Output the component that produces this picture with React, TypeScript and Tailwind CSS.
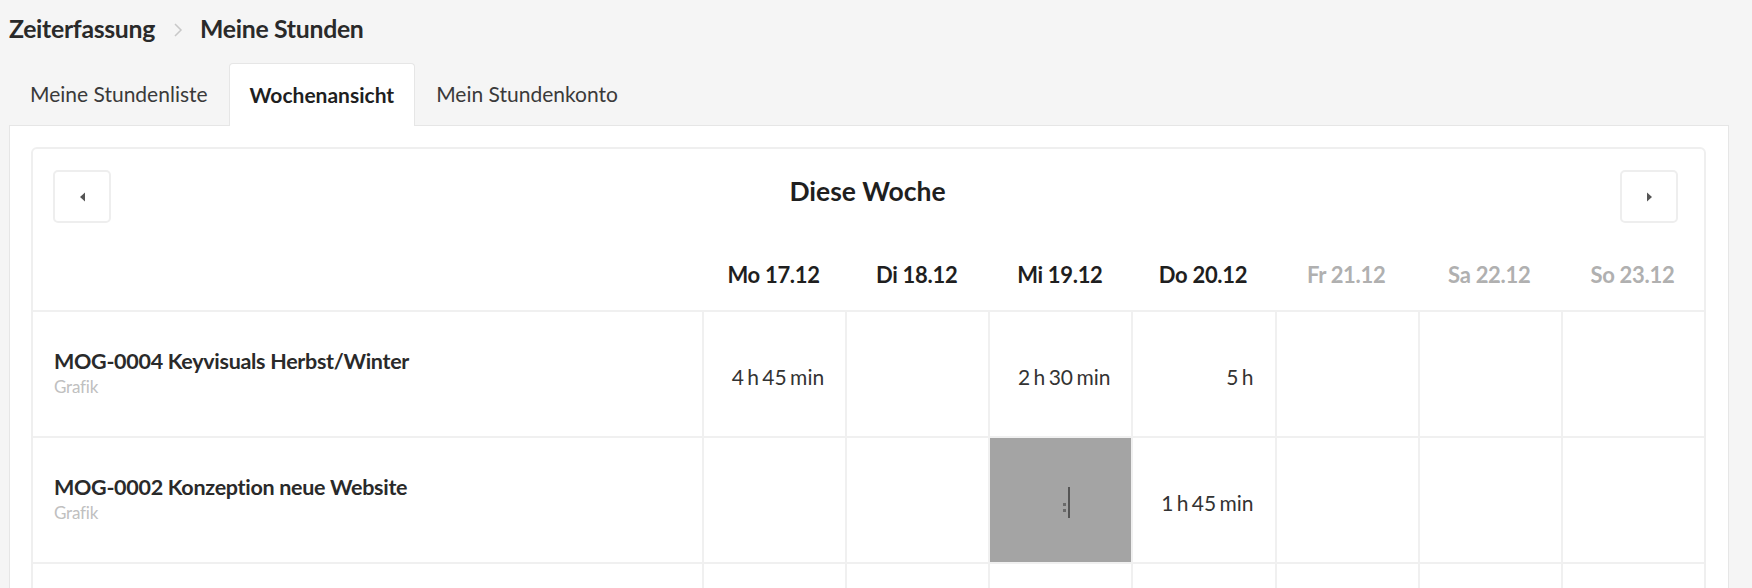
import React from 'react';

const days = [
  { label: 'Mo 17.12', active: true },
  { label: 'Di 18.12', active: true },
  { label: 'Mi 19.12', active: true },
  { label: 'Do 20.12', active: true },
  { label: 'Fr 21.12', active: false },
  { label: 'Sa 22.12', active: false },
  { label: 'So 23.12', active: false },
];

type Row = { title: string; sub: string; hours: (string | null)[]; editing?: number };

const rows: Row[] = [
  { title: 'MOG-0004 Keyvisuals Herbst/Winter', sub: 'Grafik', hours: ['4 h 45 min', null, '2 h 30 min', '5 h', null, null, null] },
  { title: 'MOG-0002 Konzeption neue Website', sub: 'Grafik', hours: [null, null, null, '1 h 45 min', null, null, null], editing: 2 },
  { title: '', sub: '', hours: [null, null, null, null, null, null, null] },
];

function Caret({ dir }: { dir: 'left' | 'right' }) {
  return (
    <svg width="7" height="10" viewBox="0 0 7 10" className="text-[#555]">
      {dir === 'left' ? (
        <polygon points="6,0.5 6,9.5 1,5" fill="currentColor" />
      ) : (
        <polygon points="1,0.5 1,9.5 6,5" fill="currentColor" />
      )}
    </svg>
  );
}

function NavButton({ dir }: { dir: 'left' | 'right' }) {
  return (
    <button className="w-[58px] h-[53px] flex items-center justify-center bg-white border-2 border-[#eeeeee] rounded-[5px]">
      <Caret dir={dir} />
    </button>
  );
}

export default function App() {
  return (
    <div className="min-h-screen bg-[#f5f5f5] text-[#333] font-['Lato','Noto_Sans',sans-serif] overflow-hidden">
      {/* breadcrumb */}
      <div className="flex items-center h-[40px] pt-[18px] pl-[9px] text-[24.8px] font-bold text-[#2a2a2a] tracking-[-0.3px]">
        <span>Zeiterfassung</span>
        <svg width="10" height="16" viewBox="0 0 10 16" className="ml-[18px] mr-[17px] mt-[2px]">
          <polyline points="2,2 8,8 2,14" fill="none" stroke="#c8c8c8" strokeWidth="1.5" />
        </svg>
        <span>Meine Stunden</span>
      </div>

      {/* tabs */}
      <div className="flex items-end h-[62px] mt-[23px] pl-[9px] text-[21px]">
        <div className="h-[62px] flex items-center px-[21px] text-[#3a3a3a]">Meine Stundenliste</div>
        <div className="h-[63px] flex items-center px-[20px] bg-white border border-b-0 border-[#e6e6e6] rounded-t-[4px] font-bold text-[#1f1f1f] relative top-[1px]">
          Wochenansicht
        </div>
        <div className="h-[62px] flex items-center px-[21px] text-[#3a3a3a]">Mein Stundenkonto</div>
      </div>

      {/* panel */}
      <div className="ml-[9px] mr-[23px] bg-white border border-[#e6e6e6] pt-[21px] pl-[21px] pr-[22px] h-[470px]">
        <div className="border-2 border-[#efefef] rounded-[6px] overflow-hidden">
          {/* header */}
          <div className="flex items-center justify-between pt-[21px] pl-[20px] pr-[26px]">
            <NavButton dir="left" />
            <div className="text-[26.5px] font-bold text-[#1f1f1f] -mt-[10px] pl-[4px]">Diese Woche</div>
            <NavButton dir="right" />
          </div>

          <div className="grid grid-cols-[669px_repeat(7,1fr)] border-b-2 border-[#f0f0f0] h-[89px] items-end pb-[19px]">
            <div />
            {days.map((d) => (
              <div
                key={d.label}
                className={`text-center text-[22px] font-bold tracking-[-0.3px] ${d.active ? 'text-[#1f1f1f]' : 'text-[#b0b0b0]'}`}
              >
                {d.label}
              </div>
            ))}
          </div>

          {rows.map((r, i) => (
            <div key={i} className="grid grid-cols-[669px_repeat(7,1fr)] h-[126px] border-b-2 border-[#f0f0f0]">
              <div className="flex flex-col justify-center pl-[21px] pb-[4px]">
                <div className="text-[21.5px] font-bold text-[#2a2a2a] leading-[26px] tracking-[-0.3px]">{r.title}</div>
                <div className="text-[17px] text-[#c0c0c0] leading-[18px] mt-[4px] tracking-[-0.2px]">{r.sub}</div>
              </div>
              {r.hours.map((h, j) =>
                r.editing === j ? (
                  <div key={j} className="bg-[#a4a4a4] border-l-2 border-[#f0f0f0] flex items-center justify-center">
                    <div className="flex items-end gap-[2px] ml-[12px] mt-[4px]">
                      <div className="flex flex-col gap-[3px] mb-[6px]">
                        <div className="w-[3px] h-[3px] bg-[#6a6a6a]" />
                        <div className="w-[3px] h-[3px] bg-[#6a6a6a]" />
                      </div>
                      <div className="w-[2px] h-[31px] bg-[#555]" />
                    </div>
                  </div>
                ) : (
                  <div
                    key={j}
                    className="border-l-2 border-[#f0f0f0] flex items-center justify-end pr-[21px] pt-[5px] text-[21px] text-[#333] [word-spacing:-2px]"
                  >
                    {h}
                  </div>
                )
              )}
            </div>
          ))}
        </div>
      </div>
    </div>
  );
}
